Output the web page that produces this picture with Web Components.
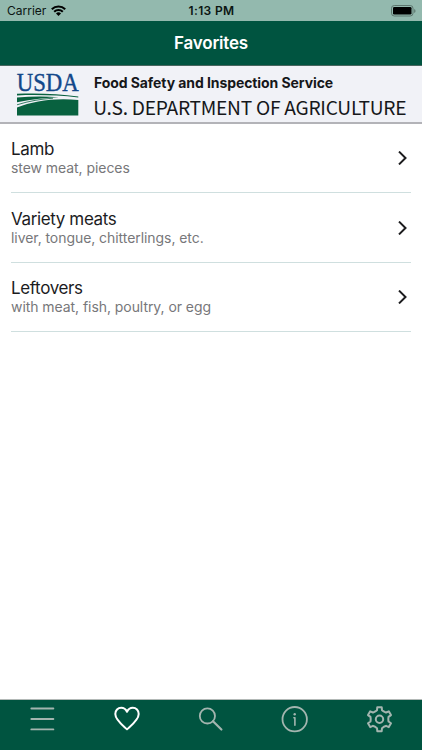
<!DOCTYPE html>
<html lang="en">
<head>
<meta charset="utf-8">
<meta name="viewport" content="width=device-width, initial-scale=1">
<title>Favorites</title>
<style>
  html, body { margin: 0; height: 100%; }
  body { font-family: Inter, "Liberation Sans", sans-serif; background: #fff; }
</style>
</head>
<body>
<favorites-app></favorites-app>
<script>
class StatusBar extends HTMLElement {
  connectedCallback() {
    this.attachShadow({ mode: 'open' });
    this.shadowRoot.innerHTML = `
      <style>
        :host {
          display: grid;
          grid-template-columns: 1fr auto 1fr;
          align-items: center;
          height: 21px;
          padding: 0 6px 0 7px;
          box-sizing: border-box;
          background: #93b9ae;
          color: #0b1512;
          font-size: 12px;
          line-height: 21px;
        }
        .left { display: flex; align-items: center; gap: 5px; }
        .time { font-weight: 600; letter-spacing: 0.35px; }
        .battery { justify-self: end; }
        svg { display: block; }
      </style>
      <div class="left">
        <span>Carrier</span>
        <svg width="15" height="11" viewBox="0 0 15 11" fill="none" stroke="#000" stroke-width="2.100">
          <path d="M.8 4.2a9.6 9.6 0 0 1 13.4 0"/>
          <path d="M3.2 6.7a6.2 6.2 0 0 1 8.6 0"/>
          <path d="M5 8.4a3.7 3.7 0 0 1 5 0L7.500 11z" fill="#000" stroke="none"/>
        </svg>
      </div>
      <span class="time">1:13 PM</span>
      <svg class="battery" width="25" height="12" viewBox="0 0 25 12">
        <rect x=".5" y=".5" width="21.500" height="10.500" rx="2.800" fill="none" stroke="#5d766e"/>
        <rect x="2" y="2" width="18.500" height="7.500" rx="1.300" fill="#000"/>
        <path d="M23.200 4v4q1.300-.6 1.300-2t-1.300-2z" fill="#5d766e"/>
      </svg>
    `;
  }
}
customElements.define('status-bar', StatusBar);

class NavBar extends HTMLElement {
  connectedCallback() {
    this.attachShadow({ mode: 'open' });
    this.shadowRoot.innerHTML = `
      <style>
        :host {
          display: flex;
          align-items: center;
          justify-content: center;
          height: 45px;
          box-sizing: border-box;
          background: #005440;
          border-bottom: 1px solid #48665f;
          color: #fff;
          font-size: 17px;
          font-weight: 600;
          letter-spacing: -0.2px;
        }
      </style>
      <slot></slot>
    `;
  }
}
customElements.define('nav-bar', NavBar);

class AgencyBanner extends HTMLElement {
  connectedCallback() {
    this.attachShadow({ mode: 'open' });
    this.shadowRoot.innerHTML = `
      <style>
        :host {
          display: flex;
          gap: 14px;
          height: 57.5px;
          box-sizing: border-box;
          padding: 7px 0 0 16px;
          background: #f1f2f7;
          border-bottom: 2px solid #b3b3b8;
          color: #16171a;
          white-space: nowrap;
        }
        svg { display: block; flex: none; overflow: visible; }
        .service { font-size: 14px; line-height: 20px; font-weight: 700; letter-spacing: -0.08px; }
        .department {
          font-family: "Noto Sans CJK JP", "Noto Sans", sans-serif;
          font-size: 19.2px;
          line-height: 29px;
          letter-spacing: -0.27px;
          margin-left: -0.8px;
        }
      </style>
      <svg width="64" height="43" viewBox="-1 0 64 43">
        <text x="-.3" y="18" textLength="62" lengthAdjust="spacingAndGlyphs" font-family="'Liberation Serif', serif" font-size="26" fill="#13488a" stroke="#13488a" stroke-width=".4">USDA</text>
        <g fill="#08613f">
          <path d="M0 20.800C20 19.800 42 20.800 61.300 23.600V24.400C42 22.400 20 21.500 0 22.500z"/>
          <path d="M0 24.600C14 23.200 28 23.200 42 24.200 30 24.600 15 26 0 29.300z"/>
          <path d="M0 34.500C16 28 38 24.600 61.300 27V42.400H0z"/>
        </g>
        <path d="M0 31.800C12 28 24 26 36 25.200" fill="none" stroke="#08613f" stroke-width=".8"/>
      </svg>
      <div>
        <div class="service">Food Safety and Inspection Service</div>
        <div class="department">U.S. DEPARTMENT OF AGRICULTURE</div>
      </div>
    `;
  }
}
customElements.define('agency-banner', AgencyBanner);

class FoodRow extends HTMLElement {
  connectedCallback() {
    this.attachShadow({ mode: 'open' });
    this.shadowRoot.innerHTML = `
      <style>
        :host {
          display: flex;
          align-items: center;
          justify-content: space-between;
          height: 69.5px;
          margin: 0 11px;
          padding: 0.6px 4px 0 0;
          box-sizing: border-box;
          border-bottom: 1px solid #cfdfdf;
        }
        .name { font-size: 17px; line-height: 20px; color: #1c1c1e; letter-spacing: -0.37px; }
        .detail { font-size: 14px; line-height: 18px; color: #77777a; letter-spacing: -0.06px; }
        svg { display: block; }
      </style>
      <div>
        <div class="name"><slot name="name"></slot></div>
        <div class="detail"><slot></slot></div>
      </div>
      <svg width="9" height="14" viewBox="0 0 9 14" fill="none" stroke="#1c1c1e" stroke-width="2">
        <path d="M1 .6 7.500 7 1 13.400"/>
      </svg>
    `;
  }
}
customElements.define('food-row', FoodRow);

// outline of a six-toothed gear
function gearPath(cx, cy) {
  const tooth = [[-3.8, -8], [-2.5, -9], [-2.2, -12], [2.2, -12], [2.5, -9], [3.8, -8]];
  const points = [];
  for (let i = 0; i < 6; i++) {
    const a = i * Math.PI / 3;
    for (const [x, y] of tooth) {
      const px = cx + x * Math.cos(a) - y * Math.sin(a);
      const py = cy + x * Math.sin(a) + y * Math.cos(a);
      points.push(px.toFixed(2) + ' ' + py.toFixed(2));
    }
  }
  return 'M' + points.join('L') + 'z';
}

const ICONS = {
  menu: '<path d="M4.300 4.500h22.100M4.300 15h22.100M4.300 25.400h22.100"/>',
  heart: '<path d="M15 25.300C11 21.600 3.300 16 3.300 10c0-3.600 2.600-6.200 5.900-6.200 2.500 0 4.700 1.600 5.800 4 1.100-2.400 3.300-4 5.800-4 3.300 0 5.900 2.600 5.900 6.200 0 6-7.700 11.600-11.700 15.300z" stroke-width="2"/>',
  search: '<circle cx="11.400" cy="11.900" r="7.600"/><path d="m17 17.300 8.400 8.200" stroke-width="2.200"/>',
  info: '<circle cx="14.700" cy="15.200" r="12.200"/><path d="M13.900 13.800h1v7.400" stroke-width="1.600"/><circle cx="14.700" cy="10.200" r="1.200" fill="currentColor" stroke="none"/>',
  gear: `<path d="${gearPath(14.5, 15.2)}" stroke-width="2"/><circle cx="14.500" cy="15.200" r="3.700" stroke-width="2"/>`
};

class TabItem extends HTMLElement {
  connectedCallback() {
    this.attachShadow({ mode: 'open' });
    this.shadowRoot.innerHTML = `
      <style>
        :host { display: flex; flex: 1; justify-content: center; color: #a3b5af; }
        :host([active]) { color: #fff; }
        svg { display: block; }
      </style>
      <svg width="30" height="30" viewBox="0 0 30 30" fill="none" stroke="currentColor" stroke-width="1.800" stroke-linecap="round" stroke-linejoin="round">${ICONS[this.getAttribute('icon')]}</svg>
    `;
  }
}
customElements.define('tab-item', TabItem);

class TabBar extends HTMLElement {
  connectedCallback() {
    this.attachShadow({ mode: 'open' });
    this.shadowRoot.innerHTML = `
      <style>
        :host {
          display: flex;
          height: 51px;
          box-sizing: border-box;
          padding-top: 4px;
          background: #005440;
          border-top: 1px solid #b3b9b7;
        }
      </style>
      <slot></slot>
    `;
  }
}
customElements.define('tab-bar', TabBar);

class FavoritesApp extends HTMLElement {
  connectedCallback() {
    this.attachShadow({ mode: 'open' });
    this.shadowRoot.innerHTML = `
      <style>
        :host { display: flex; flex-direction: column; height: 100vh; overflow: hidden; }
        main { flex: 1; }
      </style>
      <status-bar></status-bar>
      <nav-bar>Favorites</nav-bar>
      <agency-banner></agency-banner>
      <main>
        <food-row><span slot="name">Lamb</span>stew meat, pieces</food-row>
        <food-row><span slot="name">Variety meats</span>liver, tongue, chitterlings, etc.</food-row>
        <food-row><span slot="name">Leftovers</span>with meat, fish, poultry, or egg</food-row>
      </main>
      <tab-bar>
        <tab-item icon="menu"></tab-item>
        <tab-item icon="heart" active></tab-item>
        <tab-item icon="search"></tab-item>
        <tab-item icon="info"></tab-item>
        <tab-item icon="gear"></tab-item>
      </tab-bar>
    `;
  }
}
customElements.define('favorites-app', FavoritesApp);
</script>
</body>
</html>
